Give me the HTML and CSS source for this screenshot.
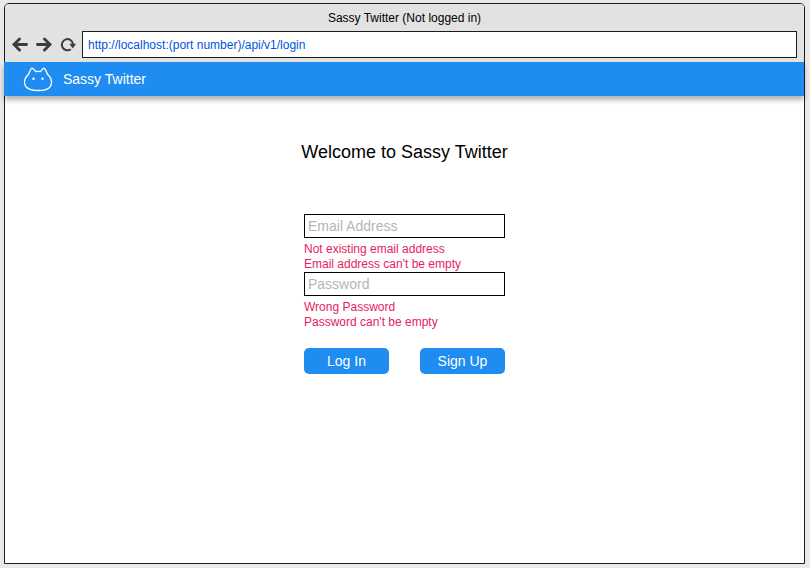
FILE: index.html
```html
<!DOCTYPE html>
<html lang="en">
<head>
<meta charset="utf-8">
<title>Sassy Twitter (Not logged in)</title>
<link rel="stylesheet" href="styles.css">
</head>
<body>
<div class="window">
  <header class="chrome">
    <div class="window-title">Sassy Twitter (Not logged in)</div>
    <div class="toolbar">
      <button class="tool" type="button" aria-label="Back">
        <svg width="16" height="16" viewBox="0 0 16 16"><path d="M14.500 7.500H2.500M7.500 2L2 7.500 7.500 13" fill="none" stroke="#3c3c3a" stroke-width="2.900" stroke-linecap="round"/></svg>
      </button>
      <button class="tool" type="button" aria-label="Forward">
        <svg width="16" height="16" viewBox="0 0 16 16"><path d="M1.500 7.500h12M8.500 2L14 7.500 8.500 13" fill="none" stroke="#3c3c3a" stroke-width="2.900" stroke-linecap="round"/></svg>
      </button>
      <button class="tool" type="button" aria-label="Reload">
        <svg width="16" height="16" viewBox="0 0 16 16"><path d="M10.800 12.200A5.600 5.600 0 1 1 13 7" fill="none" stroke="#3c3c3a" stroke-width="2"/><path d="M9.300 6.700H16l-3.200 4.800z" fill="#3c3c3a"/></svg>
      </button>
      <input class="address" type="text" aria-label="Address" value="http://localhost:(port number)/api/v1/login">
    </div>
  </header>
  <nav class="navbar">
    <svg class="logo" width="30" height="26" viewBox="0 0 30 26" aria-hidden="true">
      <path d="M5.500 8.500C6.300 6.500 7.500 3.200 8.700 2.300c1.300-.5 2.600 1.600 4 3.300 1.500-.3 3.300-.3 4.800 0C18.800 3.900 20.100 1.800 21.400 2.300c1.200.9 2.300 4.200 3.200 6.200 2.600 2.200 3.900 4.800 3.900 7.700 0 5.300-4.800 8.300-13.400 8.300S1.500 21.500 1.500 16.200C1.500 13.300 2.900 10.700 5.500 8.500z" fill="none" stroke="#fff" stroke-width="1.300" stroke-linejoin="round"/>
      <circle cx="10.500" cy="12.800" r="1.200" fill="#fff"/>
      <circle cx="19.500" cy="12.800" r="1.200" fill="#fff"/>
    </svg>
    <span class="brand">Sassy Twitter</span>
  </nav>
  <main class="page">
    <h1 class="welcome">Welcome to Sassy Twitter</h1>
    <form class="login">
      <input class="field" type="email" placeholder="Email Address" aria-label="Email Address">
      <div class="errors">
        <p>Not existing email address</p>
        <p>Email address can't be empty</p>
      </div>
      <input class="field" type="password" placeholder="Password" aria-label="Password">
      <div class="errors">
        <p>Wrong Password</p>
        <p>Password can't be empty</p>
      </div>
      <div class="actions">
        <button class="action" type="button">Log In</button>
        <button class="action" type="button">Sign Up</button>
      </div>
    </form>
  </main>
</div>
</body>
</html>
```

FILE: styles.css
```css
* {
  box-sizing: border-box;
}

body {
  display: flex;
  min-height: 100vh;
  margin: 0;
  padding: 3px 5px 4px 4px;
  background: #e9e9e9;
  font-family: "Liberation Sans", Arial, sans-serif;
  font-size: 12px;
}

.window {
  flex: 1;
  border: 1px solid #1c1c1c;
  border-radius: 5px 5px 0 0;
  background: #fff;
}

.chrome {
  padding-bottom: 4px;
  border-radius: 4px 4px 0 0;
  background: #e2e2e2;
}

.window-title {
  padding-top: 1px;
  line-height: 26px;
  text-align: center;
}

.toolbar {
  display: flex;
  align-items: center;
  gap: 8px;
  padding: 0 7px;
}

.tool {
  width: 16px;
  height: 16px;
  padding: 0;
  border: 0;
  background: none;
}

.tool svg {
  display: block;
}

.address {
  flex: 1;
  min-width: 0;
  height: 27px;
  margin-left: -2px;
  padding: 0 5px;
  border: 1px solid #1c1c1c;
  background: #fff;
  color: #0055dd;
  font: inherit;
}

.navbar {
  display: flex;
  align-items: center;
  gap: 10px;
  height: 34px;
  margin: 0 0 0 -1px;
  padding-left: 19px;
  background: #1f8cf2;
  box-shadow: 0 4px 5px rgba(0, 0, 0, 0.3);
  color: #fff;
  font-size: 14px;
}

.page {
  padding-top: 45px;
}

.welcome {
  margin: 0 0 51px;
  font-size: 18px;
  font-weight: 400;
  line-height: 22px;
  text-align: center;
}

.login {
  width: 201px;
  margin: 0 auto;
}

.field {
  display: block;
  width: 100%;
  height: 24px;
  padding: 0 3px;
  border: 1px solid #000;
  border-radius: 0;
  background: #fff;
  font: inherit;
  font-size: 14px;
}

.field::placeholder {
  color: #b5b5b5;
}

.errors {
  padding-top: 4px;
  color: #e8215f;
  line-height: 15px;
}

.errors p {
  margin: 0;
}

.actions {
  display: flex;
  justify-content: space-between;
  margin-top: 18px;
}

.action {
  width: 85px;
  height: 26px;
  padding: 0;
  border: 0;
  border-radius: 5px;
  background: #1f8cf2;
  color: #fff;
  font: inherit;
  font-size: 14px;
}
```
